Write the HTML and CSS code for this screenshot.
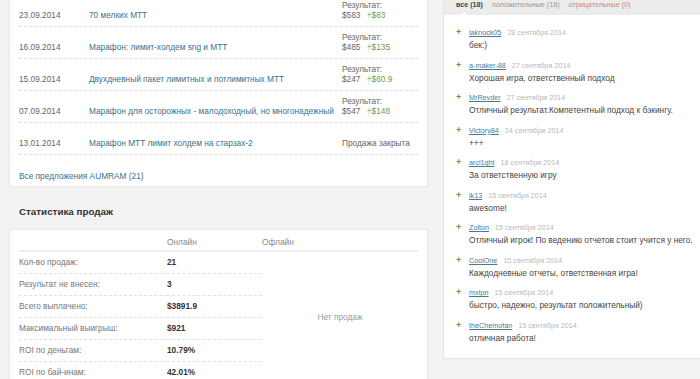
FILE: index.html
```html
<!DOCTYPE html>
<html lang="ru">
<head>
    <meta charset="UTF-8">
    <meta name="viewport" content="width=device-width, initial-scale=1.0">
    <title>AUMRAM — продажи</title>
    <link rel="stylesheet" href="styles.css">
</head>
<body>
    <div class="page">
        <div class="main">
            <div class="card offers">
                <div class="offer">
                    <span class="offer-date">23.09.2014</span>
                    <a class="offer-title" href="#">70 мелких МТТ</a>
                    <span class="offer-result">Результат:<br>$583 <span class="plus">+$83</span></span>
                </div>
                <div class="offer">
                    <span class="offer-date">16.09.2014</span>
                    <a class="offer-title" href="#">Марафон: лимит-холдем sng и МТТ</a>
                    <span class="offer-result">Результат:<br>$485 <span class="plus">+$135</span></span>
                </div>
                <div class="offer">
                    <span class="offer-date">15.09.2014</span>
                    <a class="offer-title" href="#">Двухдневный пакет лимитных и потлимитных МТТ</a>
                    <span class="offer-result">Результат:<br>$247 <span class="plus">+$60.9</span></span>
                </div>
                <div class="offer">
                    <span class="offer-date">07.09.2014</span>
                    <a class="offer-title" href="#">Марафон для осторожных - малодоходный, но многонадежный</a>
                    <span class="offer-result">Результат:<br>$547 <span class="plus">+$148</span></span>
                </div>
                <div class="offer">
                    <span class="offer-date">13.01.2014</span>
                    <a class="offer-title" href="#">Марафон МТТ лимит холдем на старзах-2</a>
                    <span class="offer-result">Продажа закрыта</span>
                </div>
                <a class="all-offers" href="#">Все предложения AUMRAM (21)</a>
            </div>

            <h2 class="section-title">Статистика продаж</h2>

            <div class="card stats">
                <table class="stats-table">
                    <thead>
                        <tr>
                            <th class="col-label"></th>
                            <th class="col-online">Онлайн</th>
                            <th class="col-offline">Офлайн</th>
                        </tr>
                    </thead>
                    <tbody>
                        <tr>
                            <td class="label">Кол-во продаж:</td>
                            <td class="value">21</td>
                            <td class="empty" rowspan="6">Нет продаж</td>
                        </tr>
                        <tr>
                            <td class="label">Результат не внесен:</td>
                            <td class="value">3</td>
                        </tr>
                        <tr>
                            <td class="label">Всего выплачено:</td>
                            <td class="value">$3891.9</td>
                        </tr>
                        <tr>
                            <td class="label">Максимальный выигрыш:</td>
                            <td class="value">$921</td>
                        </tr>
                        <tr>
                            <td class="label">ROI по деньгам:</td>
                            <td class="value">10.79%</td>
                        </tr>
                        <tr>
                            <td class="label">ROI по бай-инам:</td>
                            <td class="value">42.01%</td>
                        </tr>
                    </tbody>
                </table>
            </div>
        </div>

        <div class="side">
            <div class="tabs">
                <a class="tab active" href="#">все (18)</a>
                <a class="tab" href="#">положительные (18)</a>
                <a class="tab negative" href="#">отрицательные (0)</a>
            </div>
            <ul class="reviews">
                <li class="review">
                    <div class="review-meta"><span class="mark">+</span><a class="author" href="#">laknock05</a><span class="review-date">28 сентября 2014</span></div>
                    <p class="review-text">бек:)</p>
                </li>
                <li class="review">
                    <div class="review-meta"><span class="mark">+</span><a class="author" href="#">a-maker-88</a><span class="review-date">27 сентября 2014</span></div>
                    <p class="review-text">Хорошая игра, ответственный подход</p>
                </li>
                <li class="review">
                    <div class="review-meta"><span class="mark">+</span><a class="author" href="#">MrRevder</a><span class="review-date">27 сентября 2014</span></div>
                    <p class="review-text">Отличный результат.Компетентный подход к бэкингу.</p>
                </li>
                <li class="review">
                    <div class="review-meta"><span class="mark">+</span><a class="author" href="#">Victory84</a><span class="review-date">24 сентября 2014</span></div>
                    <p class="review-text">+++</p>
                </li>
                <li class="review">
                    <div class="review-meta"><span class="mark">+</span><a class="author" href="#">arcl1ght</a><span class="review-date">18 сентября 2014</span></div>
                    <p class="review-text">За ответственную игру</p>
                </li>
                <li class="review">
                    <div class="review-meta"><span class="mark">+</span><a class="author" href="#">lk13</a><span class="review-date">15 сентября 2014</span></div>
                    <p class="review-text">awesome!</p>
                </li>
                <li class="review">
                    <div class="review-meta"><span class="mark">+</span><a class="author" href="#">Zolton</a><span class="review-date">15 сентября 2014</span></div>
                    <p class="review-text">Отличный игрок! По ведению отчетов стоит учится у него.</p>
                </li>
                <li class="review">
                    <div class="review-meta"><span class="mark">+</span><a class="author" href="#">CoolOne</a><span class="review-date">15 сентября 2014</span></div>
                    <p class="review-text">Каждодневные отчеты, ответственная игра!</p>
                </li>
                <li class="review">
                    <div class="review-meta"><span class="mark">+</span><a class="author" href="#">mxtpn</a><span class="review-date">15 сентября 2014</span></div>
                    <p class="review-text">быстро, надежно, результат положительный)</p>
                </li>
                <li class="review">
                    <div class="review-meta"><span class="mark">+</span><a class="author" href="#">theChemofan</a><span class="review-date">15 сентября 2014</span></div>
                    <p class="review-text">отличная работа!</p>
                </li>
            </ul>
        </div>
    </div>
</body>
</html>
```

FILE: styles.css
```css
body {
    margin: 0;
    font-family: "Liberation Sans", Arial, sans-serif;
    font-size: 8.3px;
    line-height: 10.5px;
    background: #f3f3f3;
    color: #4a4a4a;
    overflow: hidden;
}
a {
    color: #40708e;
    text-decoration: none;
}
.page {
    display: flex;
    align-items: flex-start;
    gap: 15px;
    margin-top: -12px;
    padding-left: 9px;
}
.main {
    width: 419px;
    flex-shrink: 0;
}
.card {
    background: #fff;
    border: 1px solid #e8e8e8;
    padding: 0 9px;
}
.offers {
    padding-top: 5.5px;
    padding-bottom: 5px;
}
.offer {
    display: flex;
    align-items: flex-end;
    height: 26px;
    padding-bottom: 5px;
    border-bottom: 1px dashed #e0e0e0;
}
.offer-date {
    width: 70px;
    flex-shrink: 0;
    color: #666;
}
.offer-title {
    flex: 1;
}
.offer-result {
    width: 76px;
    flex-shrink: 0;
    color: #666;
}
.plus {
    color: #6a9a4c;
    margin-left: 4px;
}
.all-offers {
    display: block;
    padding-top: 16px;
}
.section-title {
    margin: 19px 0 11px 10px;
    font-size: 9.8px;
    line-height: 12px;
    font-weight: bold;
    color: #333;
}
.stats {
    padding-top: 7px;
    padding-bottom: 20px;
}
.stats-table {
    width: 100%;
    border-collapse: collapse;
}
.stats-table th {
    font-weight: normal;
    text-align: left;
    color: #888;
    padding: 0 0 2.5px;
    border-bottom: 2px solid #eee;
}
.col-label {
    width: 148px;
}
.col-online {
    width: 95px;
}
.stats-table td {
    padding: 5px 0;
    line-height: 11px;
}
.label {
    color: #777;
    border-bottom: 1px dashed #e2e2e2;
}
.value {
    font-weight: bold;
    color: #333;
    border-bottom: 1px dashed #e2e2e2;
}
.stats-table tr:last-child td {
    border-bottom: none;
}
.stats-table .empty {
    text-align: center;
    vertical-align: middle;
    color: #999;
    border-bottom: none;
}
.side {
    flex: 1;
    background: #fff;
    border: 1px solid #e6e6e6;
    border-right: none;
    padding-bottom: 14px;
}
.tabs {
    display: flex;
    gap: 9px;
    background: #ececec;
    padding: 11px 12px 5px;
    font-size: 7.2px;
    line-height: 10px;
}
.tab {
    color: #999;
    position: relative;
}
.tab.active {
    font-weight: bold;
    color: #444;
}
.tab.active::after {
    content: "";
    position: absolute;
    left: 5px;
    bottom: -5px;
    border: 3px solid transparent;
    border-bottom-color: #fff;
    border-top: none;
}
.tab.negative {
    color: #c98a8a;
}
.reviews {
    list-style: none;
    margin: 0;
    padding: 12px 0 0 11px;
}
.review {
    margin-bottom: 8.5px;
}
.review:last-child {
    margin-bottom: 0;
}
.review-meta {
    display: flex;
    align-items: center;
    font-size: 7.2px;
    line-height: 11px;
    margin-bottom: 1px;
}
.mark {
    width: 13px;
    color: #6b9b3c;
    font-weight: bold;
    font-size: 9px;
    padding-left: 1px;
}
.author {
    color: #4a7a98;
    text-decoration: underline;
    margin-right: 6px;
}
.review-date {
    color: #b8b8b8;
}
.review-text {
    margin: 0 0 0 14px;
    line-height: 12px;
    color: #444;
}
```
